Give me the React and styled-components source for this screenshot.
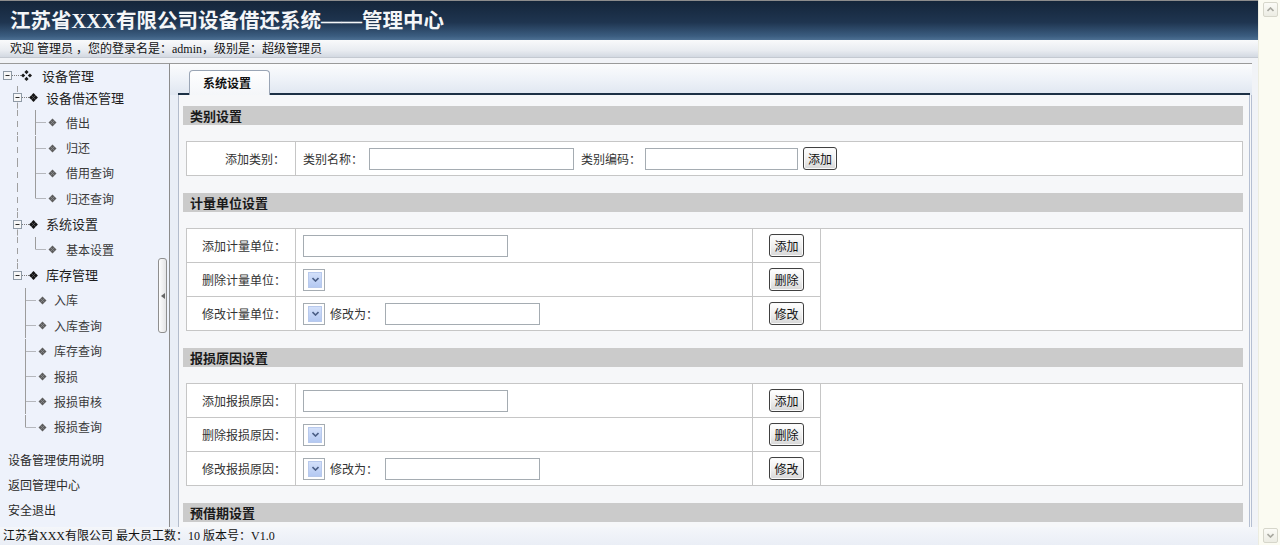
import React from 'react';
import styled, { createGlobalStyle } from 'styled-components';

const GlobalStyle = createGlobalStyle`
  html, body { margin: 0; padding: 0; overflow: hidden; }
  body {
    font-family: "Liberation Serif", "Noto Sans CJK SC", serif;
    font-size: 12px;
    color: #222;
    background: #fff;
  }
  * { box-sizing: border-box; }
`;

const Frame = styled.div`
  display: flex;
  width: 1280px;
  height: 545px;
`;

const Page = styled.div`
  flex: 1;
  display: flex;
  flex-direction: column;
  min-width: 0;
`;

const Banner = styled.header`
  height: 40px;
  flex: none;
  display: flex;
  align-items: center;
  padding-left: 10px;
  border-top: 1px solid #8c8c8c;
  background: linear-gradient(#14253a, #1f3550 55%, #3b5d80 90%, #4d7093);
`;

const BannerTitle = styled.h1`
  margin: 0;
  font-size: 20.5px;
  font-weight: bold;
  line-height: 24px;
  color: #f4f6f8;
  font-family: "Liberation Serif", "Noto Sans CJK SC", serif;
`;

const WelcomeBar = styled.div`
  height: 18px;
  flex: none;
  padding-left: 10px;
  line-height: 18px;
  color: #111;
  background: linear-gradient(#f9fafb, #e9ecf1 60%, #d3d9e2);
  border-bottom: 1px solid #c4c9d1;
`;

const Workspace = styled.div`
  flex: 1;
  display: flex;
  min-height: 0;
  padding-top: 5px;
  background: #f1f3f7;
`;

const Sidebar = styled.aside`
  width: 155px;
  flex: none;
  background: #eef2fb;
  border-top: 1px solid #9a9a9a;
  padding-top: 1px;
  overflow: hidden;
`;

const TreeRow = styled.div`
  display: flex;
  align-items: center;
  height: ${p => p.$h}px;
  white-space: nowrap;
`;

const TreeText = styled.span`
  font-family: "Noto Sans CJK SC", sans-serif;
  font-size: ${p => (p.$leaf ? 12 : 13)}px;
  line-height: 16px;
  color: ${p => (p.$leaf ? '#3a3a3a' : '#1e1e1e')};
`;

const SideLinks = styled.nav`
  margin-top: 7px;
  padding-left: 8px;
`;

const SideLink = styled.div`
  height: 25px;
  line-height: 25px;
  font-family: "Noto Sans CJK SC", sans-serif;
  font-size: 12px;
  color: #2a2a2a;
`;

const Splitter = styled.div`
  width: 14px;
  flex: none;
  display: flex;
  align-items: center;
  padding-left: 3px;
  background: #eef2fb;
  border-top: 1px solid #9a9a9a;
`;

const SplitHandle = styled.div`
  width: 9px;
  height: 75px;
  display: flex;
  align-items: center;
  justify-content: center;
  border: 1px solid #8f8f8f;
  border-radius: 3px;
  background: linear-gradient(90deg, #fdfdfd, #e4e4e6);
`;

const Main = styled.main`
  flex: 1;
  min-width: 0;
  display: flex;
  flex-direction: column;
  margin-right: 6px;
  border-top: 1px solid #9a9a9a;
  border-left: 1px solid #8c8c8c;
  background: #e9eef6;
`;

const TabBar = styled.div`
  height: 31px;
  flex: none;
  display: flex;
  padding-left: 8px;
  padding-right: 2px;
  background: linear-gradient(#fbfcfd, #eef2f8 50%, #dfe6f0);
`;

const TabStrip = styled.div`
  flex: 1;
  display: flex;
  align-items: flex-end;
  border-bottom: 2px solid #1c3045;
`;

const Tab = styled.div`
  width: 81px;
  height: 25px;
  margin-left: 11px;
  margin-bottom: -2px;
  padding-left: 13px;
  line-height: 24px;
  border: 1px solid #9aa5b5;
  border-bottom: none;
  border-radius: 4px 4px 0 0;
  background: linear-gradient(#ffffff, #f4f6f9);
  font-family: "Noto Sans CJK SC", sans-serif;
  font-weight: bold;
  font-size: 12px;
  color: #111;
`;

const Body = styled.section`
  flex: 1;
  min-height: 0;
  overflow: hidden;
  margin-left: 8px;
  padding: 11px 6px 0 4px;
  background: #f6f7f9;
  border-left: 1px solid #b3bccb;
  border-right: 3px double #b5bfd2;
`;

const SectionTitle = styled.div`
  height: 19px;
  margin-bottom: 16px;
  padding-left: 7px;
  line-height: 19px;
  background: #cbcbcb;
  font-family: "Noto Sans CJK SC", sans-serif;
  font-weight: bold;
  font-size: 13px;
  color: #1a1a1a;
`;

const FormTable = styled.table`
  width: 1057px;
  margin: 0 0 17px 3px;
  border-collapse: collapse;
  background: #fff;
`;

const Cell = styled.td`
  height: 34px;
  padding: 0;
  border: 1px solid #c6c6c6;
  font-family: "Noto Sans CJK SC", sans-serif;
  font-size: 12px;
  color: #333;
  vertical-align: middle;
`;

const LabelCell = styled(Cell)`
  width: 109px;
  text-align: ${p => (p.$right ? 'right' : 'center')};
  padding-right: ${p => (p.$right ? 10 : 0)}px;
  padding-left: ${p => (p.$right ? 0 : 6)}px;
`;

const FieldCell = styled(Cell)`
  width: ${p => p.$w || 'auto'};
  padding-left: 7px;
`;

const ButtonCell = styled(Cell)`
  width: 68px;
  text-align: center;
`;

const Field = styled.div`
  display: flex;
  align-items: center;
`;

const FieldText = styled.span`
  margin: 0 ${p => p.$gap || 6}px 0 ${p => p.$lead || 0}px;
  white-space: nowrap;
`;

const TextInput = styled.input`
  width: ${p => p.$w}px;
  height: 22px;
  margin: 0;
  padding: 0 3px;
  border: 1px solid #a5acb2;
  background: #fff;
  outline: none;
`;

const SelectBox = styled.div`
  width: 22px;
  height: 22px;
  display: flex;
  justify-content: flex-end;
  padding: 2px;
  border: 1px solid #a5acb2;
  background: #fff;
`;

const SelectArrow = styled.div`
  width: 14px;
  display: flex;
  align-items: center;
  justify-content: center;
  background: linear-gradient(#d3e0fa, #b4c9f2);
  border: 1px solid #b8c9ec;
`;

const PushButton = styled.button`
  height: 23px;
  margin: ${p => (p.$inline ? '0 0 0 5px' : '0')};
  padding: 0 4px;
  font-family: "Noto Sans CJK SC", sans-serif;
  font-size: 12px;
  line-height: 19px;
  color: #111;
  border: 1px solid #404040;
  border-radius: 3px;
  background: linear-gradient(#ffffff, #eeeeee 55%, #d6d6d6);
  box-shadow: inset 0 0 0 1px #fafafa;
`;

const StatusBar = styled.footer`
  height: 18px;
  flex: none;
  padding-left: 3px;
  line-height: 18px;
  background: linear-gradient(#f4f6fa, #eaeef6);
  color: #111;
`;

const ScrollTrack = styled.div`
  width: 22px;
  flex: none;
  display: flex;
  flex-direction: column;
  justify-content: space-between;
  align-items: center;
  padding: 2px 0 2px 1px;
  background: #fbfbf2;
  border-left: 1px solid #ecece0;
`;

const ScrollButton = styled.div`
  width: 15px;
  height: 15px;
  display: flex;
  align-items: center;
  justify-content: center;
  border: 1px solid #d6d6cb;
  border-radius: 2px;
  background: linear-gradient(#fbfbf7, #ececE3);
`;

/* ---------- tree drawing ---------- */

const diamond = (cx, cy, r) => `M${cx} ${cy - r}L${cx + r} ${cy}L${cx} ${cy + r}L${cx - r} ${cy}Z`;

function Cluster({ cx, cy, spread, r, fill }) {
  return (
    <g fill={fill}>
      <path d={diamond(cx - spread, cy, r)} />
      <path d={diamond(cx + spread, cy, r)} />
      <path d={diamond(cx, cy - spread, r)} />
      <path d={diamond(cx, cy + spread, r)} />
    </g>
  );
}

function MinusBox({ x, cy }) {
  return (
    <g>
      <rect x={x + 0.5} y={Math.round(cy) - 4.5} width="8" height="8" fill="#f7f7f7" stroke="#8f9aa6" />
      <line x1={x + 2.5} x2={x + 6.5} y1={Math.round(cy) - 0.5} y2={Math.round(cy) - 0.5} stroke="#2c2c2c" />
    </g>
  );
}

const dotted = { stroke: '#7d7d7d', strokeWidth: 1, strokeDasharray: '1 1' };
const dashed = { stroke: '#a0a0a0', strokeWidth: 1, strokeDasharray: '6 5' };
const solid = { stroke: '#9c9c9c', strokeWidth: 1 };

function TreeGuide({ row, h }) {
  const c = Math.round(h / 2) - 0.5;
  if (row.type === 'root') {
    return (
      <svg width="42" height={h}>
        <MinusBox x={3} cy={c} />
        <line x1="12" x2="21" y1={c} y2={c} {...dotted} />
        <Cluster cx={26.5} cy={c} spread={3.4} r={2.1} fill="#1c1c1c" />
      </svg>
    );
  }
  if (row.type === 'branch') {
    return (
      <svg width="46" height={h}>
        <line x1="17.5" x2="17.5" y1="0" y2={c - 5} {...dashed} />
        {!row.last && <line x1="17.5" x2="17.5" y1={c + 5} y2={h} {...dashed} />}
        <MinusBox x={13} cy={c} />
        <line x1="22" x2="29" y1={c} y2={c} {...dotted} />
        <Cluster cx={33.5} cy={c} spread={2.2} r={2.2} fill="#151515" />
      </svg>
    );
  }
  const inner = row.group === 'end';
  const lx = inner ? 25.5 : 35.5;
  const w = inner ? 54 : 66;
  return (
    <svg width={w} height={h}>
      {!inner && <line x1="17.5" x2="17.5" y1="0" y2={h} {...dashed} />}
      <line x1={lx} x2={lx} y1="0" y2={row.last ? c : h} {...solid} />
      <line x1={lx + 1} x2={lx + 11} y1={c} y2={c} {...dotted} />
      <Cluster cx={lx + 17} cy={c} spread={2} r={2} fill="#5e5e5e" />
    </svg>
  );
}

const treeRows = [
  { label: '设备管理', type: 'root', h: 21 },
  { label: '设备借还管理', type: 'branch', h: 24 },
  { label: '借出', type: 'leaf', group: 'mid' },
  { label: '归还', type: 'leaf', group: 'mid' },
  { label: '借用查询', type: 'leaf', group: 'mid' },
  { label: '归还查询', type: 'leaf', group: 'mid', last: true },
  { label: '系统设置', type: 'branch' },
  { label: '基本设置', type: 'leaf', group: 'mid', last: true },
  { label: '库存管理', type: 'branch', last: true },
  { label: '入库', type: 'leaf', group: 'end' },
  { label: '入库查询', type: 'leaf', group: 'end' },
  { label: '库存查询', type: 'leaf', group: 'end' },
  { label: '报损', type: 'leaf', group: 'end' },
  { label: '报损审核', type: 'leaf', group: 'end' },
  { label: '报损查询', type: 'leaf', group: 'end', last: true },
];

const sideLinks = ['设备管理使用说明', '返回管理中心', '安全退出'];

/* ---------- form pieces ---------- */

function Chevron({ color = '#4b5f86', up = false }) {
  return (
    <svg width="7" height="5" viewBox="0 0 7 5">
      <path d={up ? 'M0.5 4L3.5 1L6.5 4' : 'M0.5 1L3.5 4L6.5 1'} fill="none" stroke={color} strokeWidth="1.6" />
    </svg>
  );
}

function Select() {
  return (
    <SelectBox>
      <SelectArrow>
        <Chevron />
      </SelectArrow>
    </SelectBox>
  );
}

function ManageTable({ noun }) {
  return (
    <FormTable>
      <tbody>
        <tr>
          <LabelCell>添加{noun}：</LabelCell>
          <FieldCell $w="457px">
            <TextInput $w={205} />
          </FieldCell>
          <ButtonCell><PushButton>添加</PushButton></ButtonCell>
          <Cell rowSpan={3} />
        </tr>
        <tr>
          <LabelCell>删除{noun}：</LabelCell>
          <FieldCell>
            <Select />
          </FieldCell>
          <ButtonCell><PushButton>删除</PushButton></ButtonCell>
        </tr>
        <tr>
          <LabelCell>修改{noun}：</LabelCell>
          <FieldCell>
            <Field>
              <Select />
              <FieldText $lead={5} $gap={7}>修改为：</FieldText>
              <TextInput $w={155} />
            </Field>
          </FieldCell>
          <ButtonCell><PushButton>修改</PushButton></ButtonCell>
        </tr>
      </tbody>
    </FormTable>
  );
}

export default function App() {
  return (
    <>
      <GlobalStyle />
      <Frame>
        <Page>
          <Banner>
            <BannerTitle>江苏省XXX有限公司设备借还系统——管理中心</BannerTitle>
          </Banner>
          <WelcomeBar>欢迎 管理员 ，您的登录名是：admin，级别是：超级管理员</WelcomeBar>

          <Workspace>
            <Sidebar>
              {treeRows.map(row => {
                const h = row.h || 25.4;
                return (
                  <TreeRow key={row.label} $h={h}>
                    <TreeGuide row={row} h={Math.round(h)} />
                    <TreeText $leaf={row.type === 'leaf'}>{row.label}</TreeText>
                  </TreeRow>
                );
              })}
              <SideLinks>
                {sideLinks.map(l => <SideLink key={l}>{l}</SideLink>)}
              </SideLinks>
            </Sidebar>

            <Splitter>
              <SplitHandle>
                <svg width="4" height="6" viewBox="0 0 4 6">
                  <path d="M4 0L0 3L4 6Z" fill="#666" />
                </svg>
              </SplitHandle>
            </Splitter>

            <Main>
              <TabBar>
                <TabStrip>
                  <Tab>系统设置</Tab>
                </TabStrip>
              </TabBar>

              <Body>
                <SectionTitle>类别设置</SectionTitle>
                <FormTable>
                  <tbody>
                    <tr>
                      <LabelCell $right>添加类别：</LabelCell>
                      <FieldCell>
                        <Field>
                          <FieldText>类别名称：</FieldText>
                          <TextInput $w={205} />
                          <FieldText $lead={7} $gap={4}>类别编码：</FieldText>
                          <TextInput $w={153} />
                          <PushButton $inline>添加</PushButton>
                        </Field>
                      </FieldCell>
                    </tr>
                  </tbody>
                </FormTable>

                <SectionTitle>计量单位设置</SectionTitle>
                <ManageTable noun="计量单位" />

                <SectionTitle>报损原因设置</SectionTitle>
                <ManageTable noun="报损原因" />

                <SectionTitle>预借期设置</SectionTitle>
              </Body>
            </Main>
          </Workspace>

          <StatusBar>江苏省XXX有限公司 最大员工数：10 版本号：V1.0</StatusBar>
        </Page>

        <ScrollTrack>
          <ScrollButton><Chevron color="#a8a8a0" up /></ScrollButton>
          <ScrollButton><Chevron color="#a8a8a0" /></ScrollButton>
        </ScrollTrack>
      </Frame>
    </>
  );
}
